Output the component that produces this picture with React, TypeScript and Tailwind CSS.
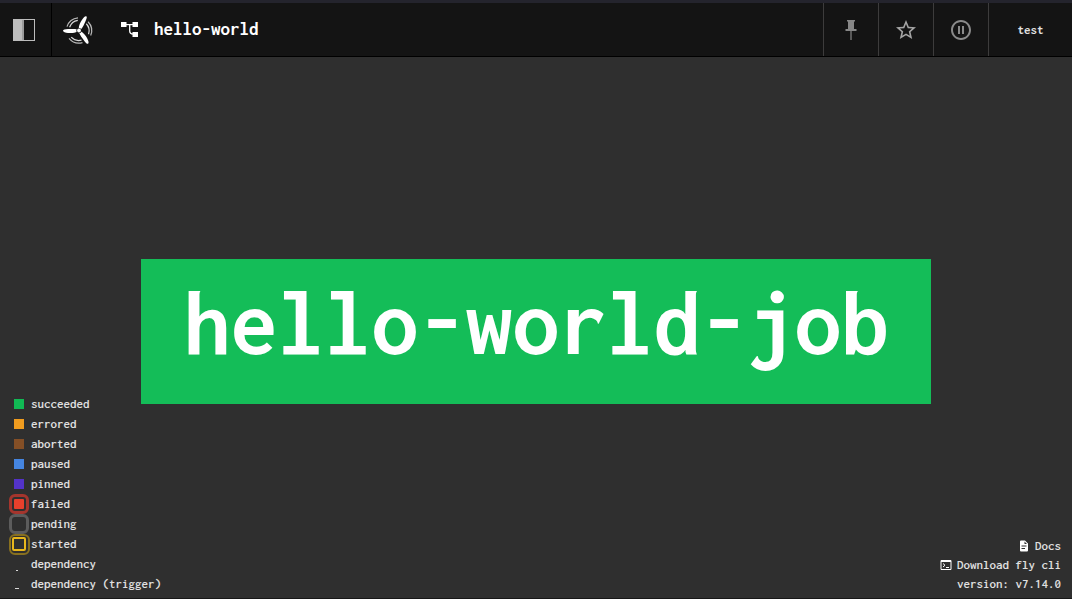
import React from "react";

const legend: { label: string; swatch: string }[] = [
  { label: "succeeded", swatch: "size-[10px] bg-[#11b954]" },
  { label: "errored", swatch: "size-[10px] bg-[#f09c1f]" },
  { label: "aborted", swatch: "size-[10px] bg-[#844f26]" },
  { label: "paused", swatch: "size-[10px] bg-[#4585e0]" },
  { label: "pinned", swatch: "size-[10px] bg-[#5333c8]" },
  { label: "failed", swatch: "size-5 rounded-md border-[3px] border-[#a5352d] bg-[#e8402c] bg-clip-content p-[2px]" },
  { label: "pending", swatch: "size-5 rounded-md border-[3px] border-[#5c5c5c]" },
  { label: "started", swatch: "started" },
  { label: "dependency", swatch: "dot" },
  { label: "dependency (trigger)", swatch: "dash" },
];

function Swatch({ kind }: { kind: string }) {
  if (kind === "started") {
    return (
      <span className="flex size-[21px] shrink-0 items-center justify-center rounded-md border-2 border-[#88701f]">
        <span className="size-[14px] rounded-[2px] border-2 border-[#e8b71d]" />
      </span>
    );
  }
  if (kind === "dot") return <span className="mt-3 mr-1 h-px w-[2px] bg-[#d8d8d8]" />;
  if (kind === "dash") return <span className="mt-2 mr-1 h-px w-1 bg-[#d8d8d8]" />;
  return <span className={`shrink-0 ${kind}`} />;
}

function Fan() {
  return (
    <svg viewBox="0 0 32 32" className="size-8" aria-hidden="true">
      <g fill="#fff">
        <g id="blade">
          <path d="M14.5 15.4C11 14.6 8 14.9 5 15.1C2 15.3 0 15.6 0 16.7C0 18 2.5 18.6 5 18.9C8 19.3 11.5 19.2 14.5 17.6Z" />
          <path d="M4 12.6A13 13 0 0 1 15 3.8" fill="none" stroke="#b8b8b8" strokeWidth="1.2" />
          <path d="M6.6 13.2A10.5 10.5 0 0 1 14.8 6.3" fill="none" stroke="#d8d8d8" strokeWidth="1.2" />
        </g>
        <use href="#blade" transform="rotate(118 16 16.5)" />
        <use href="#blade" transform="rotate(236 16 16.5)" />
        <circle cx="16" cy="16.5" r="2.6" fill="#141414" />
        <circle cx="16" cy="16.5" r="1.9" />
      </g>
    </svg>
  );
}

const cell = "flex w-[55px] items-center justify-center border-l border-[#3d3c3c]";

export default function App() {
  return (
    <div className="flex min-h-screen flex-col border-t-3 border-b border-t-[#24242d] border-b-[#171717] bg-[#2f2f2f] font-['Inconsolata','DejaVu_Sans_Mono',monospace] text-[13px] font-semibold text-[#e0e0e0]">
      <header className="flex h-[54px] items-stretch border-b border-black bg-[#141414]">
        <button aria-label="Toggle sidebar" className="flex w-[52px] items-center border-r border-black pl-3">
          <svg viewBox="0 0 24 24" className="size-6" aria-hidden="true">
            <path d="M1 1h22v22H1z" fill="#bdbdbd" />
            <path d="M12 2h10v20H12z" fill="#141414" />
            <path d="M11 2v20" stroke="#7a7a7a" />
          </svg>
        </button>
        <a href="#home" aria-label="Home" className="flex w-[54px] items-center justify-center">
          <Fan />
        </a>
        <a href="#pipeline" className="flex items-center gap-3 pl-3 text-[19px] font-bold text-white">
          <svg viewBox="0 0 24 24" className="size-6" fill="#fff" aria-hidden="true">
            <path d="M3 4h5.5v5H3zM14.5 4h5.5v5h-5.5zM14.5 14h5.5v5h-5.5z" />
            <path d="M8 6h7v1.2H8z" />
            <path d="M11.7 6.5v6.5q0 3 3.5 3" fill="none" stroke="#fff" strokeWidth="1.3" />
          </svg>
          <span>hello-world</span>
        </a>
        <div className="ml-auto flex items-stretch">
          <button aria-label="Pin" className={cell}>
            <svg viewBox="0 0 14 22" className="h-[22px] w-[14px]" aria-hidden="true">
              <path d="M3 1h8v1.5h-1V10h2.5v2h-11v-2H4V2.5H3z" fill="#878787" />
              <path d="M7 12v9" stroke="#707070" strokeWidth="1.5" />
            </svg>
          </button>
          <button aria-label="Favorite" className={cell}>
            <svg viewBox="0 0 24 24" className="size-6" fill="#a5a5a5" aria-hidden="true">
              <path d="M12 15.39l-3.76 2.27.99-4.28-3.32-2.88 4.38-.37L12 6.09l1.71 4.04 4.38.37-3.32 2.88.99 4.28M22 9.24l-7.19-.61L12 2 9.19 8.63 2 9.24l5.45 4.73L5.82 21 12 17.27 18.18 21l-1.64-7.03L22 9.24z" />
            </svg>
          </button>
          <button aria-label="Pause" className={cell}>
            <svg viewBox="0 0 24 24" className="size-6" fill="#8a8a8a" aria-hidden="true">
              <path d="M13 16h2V8h-2m-4 8h2V8H9m3 12c-4.41 0-8-3.59-8-8s3.59-8 8-8 8 3.59 8 8-3.59 8-8 8m0-18C6.48 2 2 6.48 2 12s4.48 10 10 10 10-4.48 10-10S17.52 2 12 2z" />
            </svg>
          </button>
          <button className="flex w-[84px] items-center justify-center border-l border-[#3d3c3c] font-bold">test</button>
        </div>
      </header>

      <main className="relative flex flex-1 items-center justify-center pt-2">
        <a href="#job" className="bg-[#14bd58] px-[42px] pt-4 pb-[33px] text-[94px] leading-[96px] font-bold whitespace-nowrap text-white">
          hello-world-job
        </a>

        <ul className="absolute bottom-1 left-2">
          {legend.map(({ label, swatch }) => (
            <li key={label} className="flex h-5 items-center">
              <span className="flex w-[23px] shrink-0 items-center justify-center pr-px">
                <Swatch kind={swatch} />
              </span>
              {label}
            </li>
          ))}
        </ul>

        <div className="absolute right-[11px] bottom-[5px] flex flex-col items-end">
          <a href="#docs" className="flex h-[19px] items-center gap-[5px]">
            <svg viewBox="0 0 24 24" className="size-3" fill="#fff" aria-hidden="true">
              <path fillRule="evenodd" d="M14 1H6a2 2 0 0 0-2 2v18a2 2 0 0 0 2 2h12a2 2 0 0 0 2-2V7zM7 18h7v-2H7zM7 13h10v-2H7zM13 8V3l5 5z" />
            </svg>
            Docs
          </a>
          <a href="#cli" className="flex h-[19px] items-center gap-[5px]">
            <svg viewBox="0 0 24 24" className="size-3" fill="none" stroke="#fff" strokeWidth="2" aria-hidden="true">
              <path d="M2 3h20v18H2zM2 5h20M6 9l4 3.5L6 16M12 17h6" />
            </svg>
            Download fly cli
          </a>
          <p className="h-[19px] leading-[19px]">version: v7.14.0</p>
        </div>
      </main>
    </div>
  );
}
